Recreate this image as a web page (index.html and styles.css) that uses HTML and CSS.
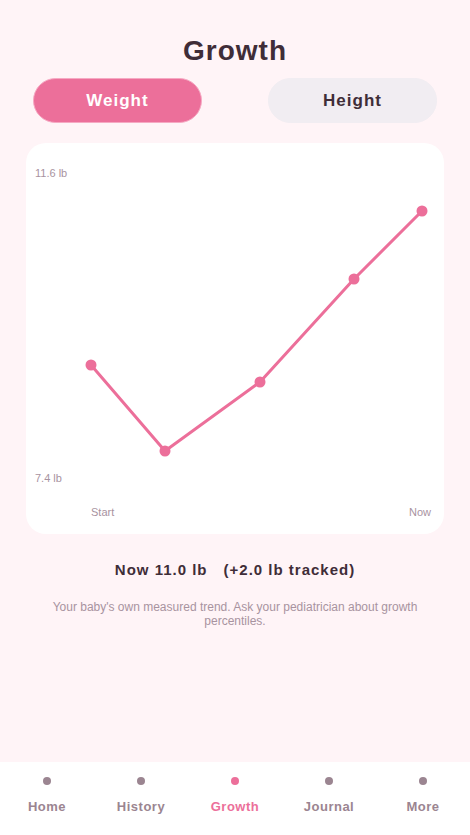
FILE: index.html
```html
<!DOCTYPE html>
<html lang="en">
<head>
<meta charset="utf-8">
<title>Growth</title>
<link rel="stylesheet" href="styles.css">
</head>
<body>
<div class="app">
  <main class="main">
    <h1 class="title">Growth</h1>
    <div class="toggle">
      <button class="seg seg-active">Weight</button>
      <button class="seg">Height</button>
    </div>
    <section class="card">
      <svg class="chart" width="418" height="391" viewBox="0 0 418 391">
        <text class="axis" x="9" y="34">11.6 lb</text>
        <text class="axis" x="9" y="339">7.4 lb</text>
        <text class="axis" x="65" y="373">Start</text>
        <text class="axis" x="405" y="373" text-anchor="end">Now</text>
        <polyline class="line" points="65,222 139,308 234,239 328,136 396,68"/>
        <circle class="pt" cx="65" cy="222" r="5.5"/>
        <circle class="pt" cx="139" cy="308" r="5.5"/>
        <circle class="pt" cx="234" cy="239" r="5.5"/>
        <circle class="pt" cx="328" cy="136" r="5.5"/>
        <circle class="pt" cx="396" cy="68" r="5.5"/>
      </svg>
    </section>
    <p class="summary"><span>Now 11.0 lb</span><span>(+2.0 lb tracked)</span></p>
    <p class="note">Your baby's own measured trend. Ask your pediatrician about growth percentiles.</p>
  </main>
  <nav class="nav">
    <a class="tab"><span class="dot"></span><span class="lbl">Home</span></a>
    <a class="tab"><span class="dot"></span><span class="lbl">History</span></a>
    <a class="tab tab-active"><span class="dot"></span><span class="lbl">Growth</span></a>
    <a class="tab"><span class="dot"></span><span class="lbl">Journal</span></a>
    <a class="tab"><span class="dot"></span><span class="lbl">More</span></a>
  </nav>
</div>
</body>
</html>
```
FILE: styles.css
```css
* { box-sizing: border-box; }
html, body {
  margin: 0;
  padding: 0;
  height: 100%;
}
body {
  background: #fff4f7;
  font-family: "Liberation Sans", Arial, sans-serif;
  color: #3f2d38;
}
.app {
  height: 835px;
  display: flex;
  flex-direction: column;
}
.main {
  flex: 1;
  display: flex;
  flex-direction: column;
}
.title {
  margin: 34px 0 0;
  font-size: 28px;
  line-height: 34px;
  font-weight: 700;
  letter-spacing: 1px;
  text-align: center;
  color: #3f2d38;
}
.toggle {
  margin-top: 10px;
  padding: 0 33px;
  display: flex;
  gap: 66px;
}
.seg {
  flex: 1;
  height: 45px;
  border: 1px solid #f1edf2;
  border-radius: 23px;
  background: #f1edf2;
  color: #3f2d38;
  font-family: "Liberation Sans", Arial, sans-serif;
  font-size: 17px;
  font-weight: 700;
  letter-spacing: 1px;
  padding: 0;
}
.seg-active {
  background: #ec6f9a;
  border-color: #f6a9c3;
  color: #ffffff;
}
.card {
  margin: 20px 26px 0;
  height: 391px;
  background: #ffffff;
  border-radius: 20px;
  overflow: hidden;
}
.chart { display: block; }
.axis {
  font-family: "Liberation Sans", Arial, sans-serif;
  font-size: 11px;
  fill: #a8939f;
}
.line {
  fill: none;
  stroke: #ec6f9a;
  stroke-width: 3;
  stroke-linejoin: round;
  stroke-linecap: round;
}
.pt { fill: #ec6f9a; }
.summary {
  margin: 26px 0 0;
  display: flex;
  justify-content: center;
  gap: 16px;
  font-size: 15px;
  line-height: 20px;
  font-weight: 700;
  letter-spacing: 1px;
  color: #3f2d38;
}
.note {
  margin: 20px 0 0;
  padding: 0 40px;
  text-align: center;
  font-size: 12px;
  line-height: 14px;
  color: #a8939f;
}
.nav {
  height: 73px;
  background: #ffffff;
  display: flex;
  padding-top: 15px;
}
.tab {
  flex: 1;
  display: flex;
  flex-direction: column;
  align-items: center;
  gap: 14px;
  color: #9b8591;
}
.dot {
  width: 8px;
  height: 8px;
  border-radius: 50%;
  background: #9b8591;
}
.lbl {
  font-size: 13px;
  line-height: 16px;
  font-weight: 700;
  letter-spacing: 0.5px;
}
.tab-active { color: #ec6f9a; }
.tab-active .dot { background: #ec6f9a; }
```
